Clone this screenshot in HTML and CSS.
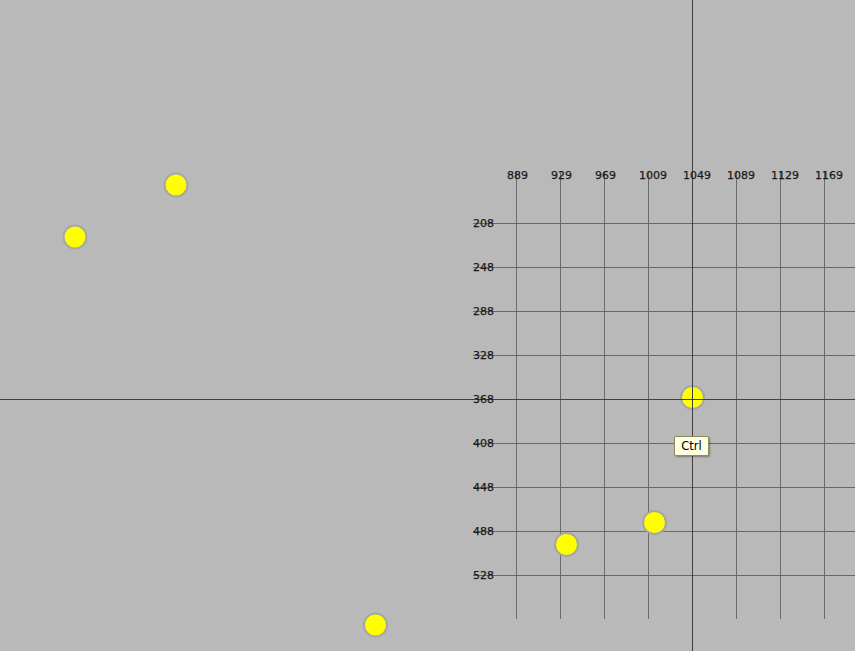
FILE: index.html
```html
<!DOCTYPE html>
<html lang="en">

<head>
    <meta charset="UTF-8">
    <meta name="viewport" content="width=device-width, initial-scale=1.0">
    <title>Grid Canvas</title>

    <link rel="stylesheet" href="styles.css">
</head>

<body>
    <div id="stage">
        <svg id="canvas" width="855" height="651" viewBox="0 0 855 651">
            <!-- Grid lines -->
            <g class="grid" id="gridLines"></g>
            <!-- Points -->
            <g id="points">
                <circle class="dot" cx="176" cy="185" r="11.5"></circle>
                <circle class="dot" cx="75" cy="237" r="11.5"></circle>
                <circle class="dot" cx="692.5" cy="397.5" r="11.5"></circle>
                <circle class="dot" cx="654.5" cy="522.5" r="11.5"></circle>
                <circle class="dot" cx="566.5" cy="544.5" r="11.5"></circle>
                <circle class="dot" cx="375.5" cy="625" r="11.5"></circle>
            </g>
            <!-- Crosshair goes on top -->
            <g class="crosshair">
                <line x1="692.5" y1="0" x2="692.5" y2="651"></line>
                <line x1="0" y1="399.5" x2="855" y2="399.5"></line>
            </g>
        </svg>

        <div id="labels"></div>

        <div class="tooltip">Ctrl</div>
    </div>

    <script>
        document.addEventListener("DOMContentLoaded", function () {
            var grid = document.getElementById("gridLines");
            var labels = document.getElementById("labels");
            var ns = "http://www.w3.org/2000/svg";

            // Vertical lines with the x values on top
            for (var i = 0; i < 8; i++) {
                var x = 516 + i * 44;
                var line = document.createElementNS(ns, "line");
                line.setAttribute("x1", x + 0.5);
                line.setAttribute("x2", x + 0.5);
                line.setAttribute("y1", 171);
                line.setAttribute("y2", 619);
                grid.appendChild(line);

                var label = document.createElement("span");
                label.className = "axisLabel";
                label.textContent = 889 + i * 40;
                label.style.left = (x - 9) + "px";
                label.style.top = "169px";
                labels.appendChild(label);
            }

            // Horizontal lines with the y values on the left
            for (var j = 0; j < 9; j++) {
                var y = 223 + j * 44;
                var hline = document.createElementNS(ns, "line");
                hline.setAttribute("x1", 473);
                hline.setAttribute("x2", 855);
                hline.setAttribute("y1", y + 0.5);
                hline.setAttribute("y2", y + 0.5);
                grid.appendChild(hline);

                var ylabel = document.createElement("span");
                ylabel.className = "axisLabel";
                ylabel.textContent = 208 + j * 40;
                ylabel.style.left = "473px";
                ylabel.style.top = (y - 6) + "px";
                labels.appendChild(ylabel);
            }
        });
    </script>
</body>

</html>
```

FILE: styles.css
```css
body {
    margin: 0;
    padding: 0;
    background-color: #b9b9b9;
    font-family: "DejaVu Sans", Verdana, sans-serif;
    overflow: hidden;
}

#stage {
    position: relative;
    width: 855px;
    height: 651px;
}

#canvas {
    display: block;
}

.grid line {
    stroke: #6a6a6a;
    stroke-width: 1;
    shape-rendering: crispEdges;
}

.crosshair line {
    stroke: #404040;
    stroke-width: 1;
    shape-rendering: crispEdges;
}

.dot {
    fill: #ffff00;
    stroke: #a6a6a6;
    stroke-width: 2;
}

.axisLabel {
    position: absolute;
    font-size: 11px;
    line-height: 13px;
    color: #1a1a1a;
    -webkit-text-stroke: 0.25px #1a1a1a;
    white-space: nowrap;
}

/* Small hint box near the cursor */
.tooltip {
    position: absolute;
    left: 674px;
    top: 436px;
    width: 33px;
    height: 18px;
    box-sizing: content-box;
    background-color: #ffffe1;
    border: 1px solid #8c8c5c;
    border-radius: 2px;
    box-shadow: 1px 1px 2px rgba(0, 0, 0, 0.35);
    font-size: 11.5px;
    line-height: 18px;
    color: #000;
    text-align: center;
}
```
